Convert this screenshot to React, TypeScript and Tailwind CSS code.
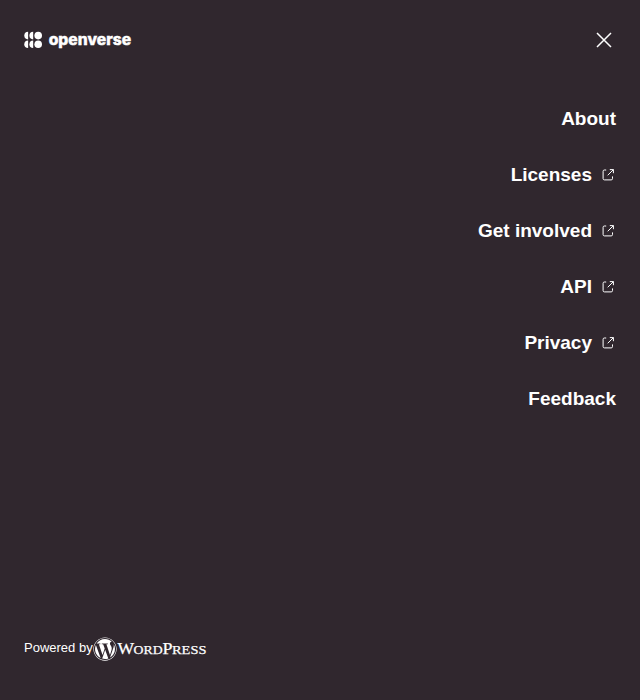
import { FaWordpress } from 'react-icons/fa';

const links = [
  { label: 'About', external: false },
  { label: 'Licenses', external: true },
  { label: 'Get involved', external: true },
  { label: 'API', external: true },
  { label: 'Privacy', external: true },
  { label: 'Feedback', external: false },
];

function OpenverseLogo() {
  return (
    <svg className="h-6 w-[112px]" viewBox="0 -4 112 24" fill="white" aria-label="Openverse">
      {[3.6, 12.3].map((y) => (
        <g key={y} transform={`translate(0 ${y})`}>
          <path d="M4.1 -3.8A3.8 3.8 0 0 0 4.1 3.8Z" />
          <path d="M9.2 -3.8A3.8 3.8 0 0 0 9.2 3.8Z" />
          <circle cx="14.2" cy="0" r="3.8" />
        </g>
      ))}
      <text x="24.7" y="12.7" textLength="82.4" lengthAdjust="spacingAndGlyphs" stroke="white" strokeWidth="0.4" className="font-['Inter',sans-serif] text-[15px] font-extrabold">
        openverse
      </text>
    </svg>
  );
}

function ExternalIcon() {
  return (
    <svg className="size-4" viewBox="0 0 16 16" fill="none" stroke="white" strokeWidth="1">
      <path d="M6.2 3H4.4Q3.1 3 3.1 4.3V11.6Q3.1 12.9 4.4 12.9H11.2Q12.5 12.9 12.5 11.6V9.4" />
      <path d="M9.8 2.6H13.4V6.2M13.4 2.6L7.7 8.3" />
    </svg>
  );
}

function WordPressLogo() {
  return (
    <span className="flex items-center pt-px">
      <FaWordpress className="size-6" />
      <svg className="h-6 w-[90px]" viewBox="0 0 90 24" fill="white" stroke="white" strokeWidth="0.25" aria-label="WordPress">
        <g className="font-['Liberation_Serif',serif]">
          <text x="0.6" y="17.4" fontSize="17" textLength="16.6" lengthAdjust="spacingAndGlyphs">W</text>
          <text x="16.6" y="17.4" fontSize="13.4" textLength="29" lengthAdjust="spacingAndGlyphs">ORD</text>
          <text x="45.4" y="17.4" fontSize="17" textLength="10" lengthAdjust="spacingAndGlyphs">P</text>
          <text x="55" y="17.4" fontSize="13.4" textLength="34.4" lengthAdjust="spacingAndGlyphs">RESS</text>
        </g>
      </svg>
    </span>
  );
}

export default function App() {
  return (
    <div className="flex h-[700px] w-full flex-col bg-[#30272e] font-['Liberation_Sans',Arial,sans-serif] text-white">
      <header className="flex h-20 items-center justify-between px-6">
        <OpenverseLogo />
        <button aria-label="Close" className="size-6">
          <svg className="size-6" viewBox="0 0 24 24" fill="none" stroke="white" strokeWidth="1.5">
            <path d="M5 5L19 19M19 5L5 19" />
          </svg>
        </button>
      </header>
      <nav className="flex flex-col items-end gap-7 px-6 pt-[25px]">
        {links.map((link) => (
          <a key={link.label} className="flex h-7 items-center gap-2 text-[19px] leading-7 font-bold">
            {link.label}
            {link.external && <ExternalIcon />}
          </a>
        ))}
      </nav>
      <footer className="mt-auto mb-10 flex h-6 items-center px-6 text-[13px]">
        <span>Powered by</span>
        <WordPressLogo />
      </footer>
    </div>
  );
}
